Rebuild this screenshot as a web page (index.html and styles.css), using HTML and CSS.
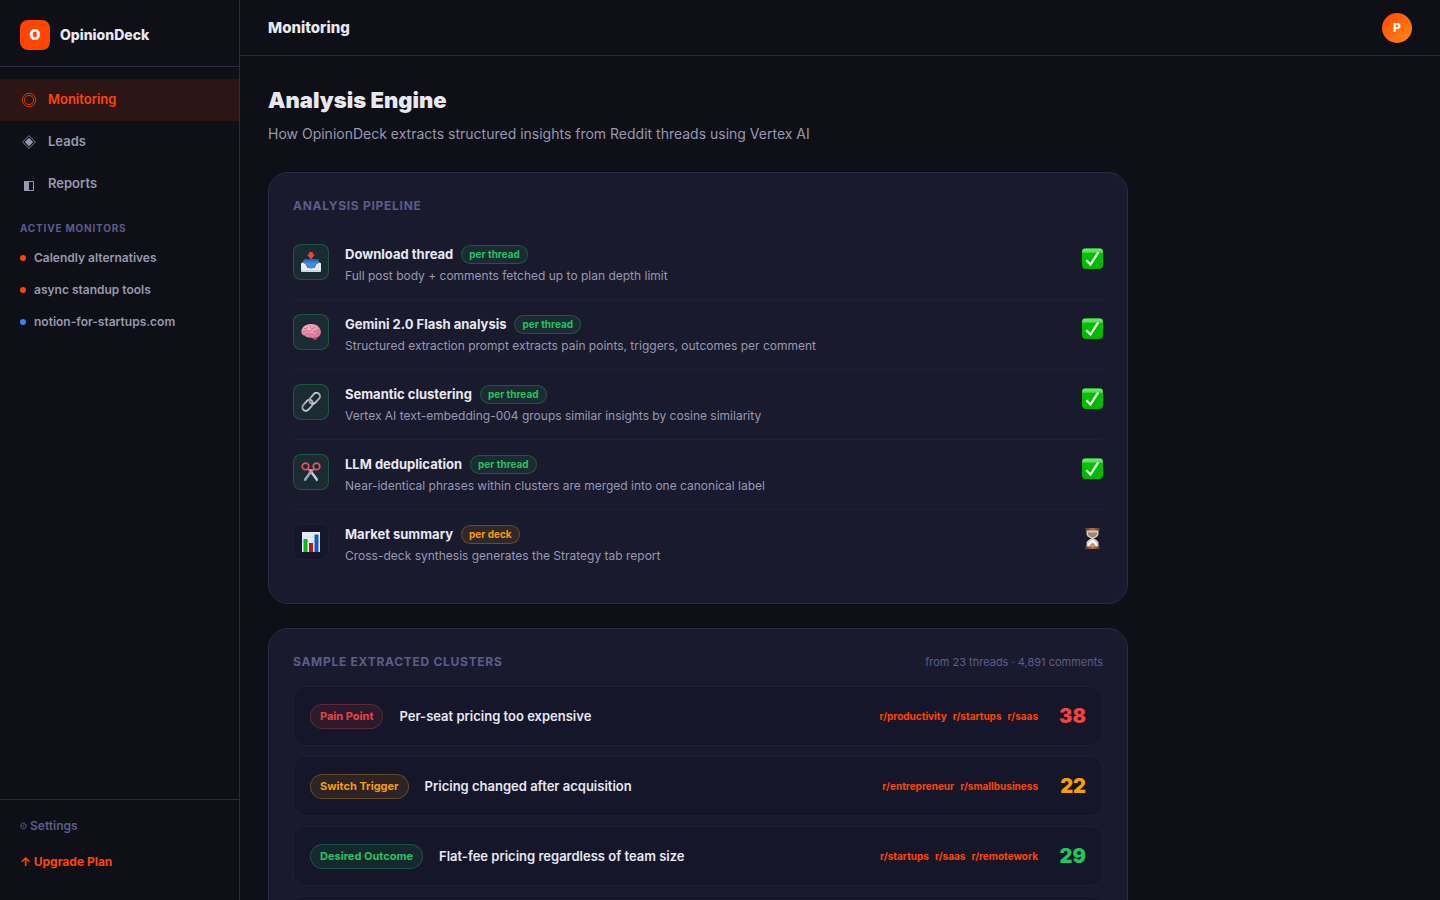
FILE: index.html
```
<!DOCTYPE html>
<html lang="en">
<head>
    <meta charset="UTF-8">
    <meta name="viewport" content="width=device-width, initial-scale=1.0">
    <title>OpinionDeck - Monitoring</title>
    <link rel="stylesheet" href="styles.css">
</head>
<body>
    <!-- Shared icon shapes -->
    <svg class="defs" width="0" height="0" aria-hidden="true">
        <defs>
            <linearGradient id="check-fill" x1="0" y1="0" x2="0" y2="1">
                <stop offset="0" stop-color="#0a9a14"/>
                <stop offset="0.08" stop-color="#7fe27f"/>
                <stop offset="0.2" stop-color="#4fd650"/>
                <stop offset="0.26" stop-color="#00c400"/>
                <stop offset="1" stop-color="#00b400"/>
            </linearGradient>
            <linearGradient id="metal" x1="0" y1="0" x2="1" y2="1">
                <stop offset="0" stop-color="#8d8d92"/>
                <stop offset="0.5" stop-color="#d4d6da"/>
                <stop offset="1" stop-color="#9a9ca2"/>
            </linearGradient>
            <linearGradient id="tray-blue" x1="0" y1="0" x2="0" y2="1">
                <stop offset="0" stop-color="#1f5fae"/>
                <stop offset="1" stop-color="#4a9df0"/>
            </linearGradient>
            <radialGradient id="brain-pink" cx="0.4" cy="0.3" r="0.8">
                <stop offset="0" stop-color="#f9b9ca"/>
                <stop offset="1" stop-color="#d9708f"/>
            </radialGradient>
            <linearGradient id="wood" x1="0" y1="0" x2="1" y2="0">
                <stop offset="0" stop-color="#5f3420"/>
                <stop offset="0.5" stop-color="#b0714b"/>
                <stop offset="1" stop-color="#5f3420"/>
            </linearGradient>
            <symbol id="check" viewBox="0 0 21 21">
                <rect width="21" height="21" rx="4" fill="url(#check-fill)"/>
                <path d="M4.3 12.2l4.2 4.3L16.2 4.4" fill="none" stroke="#fff" stroke-width="2.2"/>
            </symbol>
        </defs>
    </svg>

    <aside class="sidebar">
        <div class="logo">
            <div class="logo-mark">O</div>
            <span class="logo-name">OpinionDeck</span>
        </div>
        <nav class="nav">
            <a href="#" class="nav-item active">
                <svg class="nav-icon" viewBox="0 0 18 18" fill="none" stroke="currentColor" stroke-width="0.8">
                    <circle cx="9" cy="10" r="6.7"/>
                    <circle cx="9" cy="10" r="4.6"/>
                </svg>
                Monitoring
            </a>
            <a href="#" class="nav-item">
                <svg class="nav-icon" viewBox="0 0 18 18">
                    <path d="M9 3.6L15.4 10 9 16.4 2.6 10z" fill="none" stroke="currentColor" stroke-width="0.8"/>
                    <path d="M9 5.8l4.2 4.2L9 14.2 4.8 10z" fill="currentColor"/>
                </svg>
                Leads
            </a>
            <a href="#" class="nav-item">
                <svg class="nav-icon" viewBox="0 0 18 18">
                    <path d="M4.5 7.5h9v9h-9z" fill="none" stroke="currentColor"/>
                    <path d="M4 7h5v10H4z" fill="currentColor"/>
                </svg>
                Reports
            </a>
            <div class="nav-label">Active Monitors</div>
            <a href="#" class="monitor"><span class="dot"></span>Calendly alternatives</a>
            <a href="#" class="monitor"><span class="dot"></span>async standup tools</a>
            <a href="#" class="monitor"><span class="dot blue"></span>notion-for-startups.com</a>
        </nav>
        <div class="sidebar-footer">
            <a href="#" class="footer-link">
                <svg class="gear" viewBox="0 0 7 8" fill="none" stroke="currentColor">
                    <circle cx="3.5" cy="4" r="2.4" stroke-width="0.8"/>
                    <circle cx="3.5" cy="4" r="3.1" stroke-width="0.8" stroke-dasharray="1.2 1.2"/>
                    <circle cx="3.5" cy="4" r="0.7" stroke="none" fill="currentColor"/>
                </svg>
                Settings
            </a>
            <a href="#" class="footer-link upgrade">↑ Upgrade Plan</a>
        </div>
    </aside>

    <div class="main">
        <header class="topbar">
            <div class="topbar-title">Monitoring</div>
            <button class="avatar" type="button">P</button>
        </header>

        <main class="content">
            <h1>Analysis Engine</h1>
            <p class="subtitle">How OpinionDeck extracts structured insights from Reddit threads using Vertex AI</p>

            <section class="card">
                <div class="card-header">
                    <h2>Analysis Pipeline</h2>
                </div>
                <div class="step done">
                    <div class="step-icon">
                        <svg viewBox="0 0 20 20">
                            <path d="M3 7h14l2.4 6H.6z" fill="url(#tray-blue)"/>
                            <path d="M0 11.5l1.2-1 3.6 2 1.6 3.2h7.2l1.6-3.2 3.6-2 1.2 1V19q0 1-1 1H1q-1 0-1-1z" fill="#e9edf0"/>
                            <path d="M4.8 11.5h10.4l-2 4.2-3.2 1-3.2-1z" fill="#3d8fe6"/>
                            <path d="M0 19h20" stroke="#b4bac0" stroke-width="0.8"/>
                            <path d="M8.2 0h3.6v2.6H14L10 7.4 6 2.6h2.2z" fill="#f44336"/>
                        </svg>
                    </div>
                    <div class="step-body">
                        <div class="step-title">Download thread <span class="tag green">per thread</span></div>
                        <div class="step-desc">Full post body + comments fetched up to plan depth limit</div>
                    </div>
                    <svg class="step-status" role="img" aria-label="Done"><use href="#check"/></svg>
                </div>
                <div class="step done">
                    <div class="step-icon">
                        <svg viewBox="0 0 20 20">
                            <path d="M10.5 14.5q3.8-1.2 6 .8 0 2.4-3 2.7-1.6-.6-3-3.500z" fill="#b24a68"/>
                            <path d="M.4 10.500C0 6.500 3 3.200 7 2.500 11 1.400 16 2.200 18 5.200c1.700 2 2.600 5 1.200 7.600-.8 2-2.800 3-4.700 2.500-2.200 1-4.500.6-6 .200-2 .300-3.500-.8-4.600-1.800C1.500 13.600.6 12 .4 10.500z" fill="url(#brain-pink)"/>
                            <path d="M3 6.500q3 1 4-1.500M2 10.500q2.500-3 5-1.500t4-1.500M9 3.500q-.5 3 2 3t3-2M12 9q2 2 4 0t2.500-1M4 13q2-2.500 5-1t4 .500M15 12.500q1.500-.5 3-2.500" fill="none" stroke="#c5577a" stroke-width="0.8"/>
                        </svg>
                    </div>
                    <div class="step-body">
                        <div class="step-title">Gemini 2.0 Flash analysis <span class="tag green">per thread</span></div>
                        <div class="step-desc">Structured extraction prompt extracts pain points, triggers, outcomes per comment</div>
                    </div>
                    <svg class="step-status" role="img" aria-label="Done"><use href="#check"/></svg>
                </div>
                <div class="step done">
                    <div class="step-icon">
                        <svg viewBox="0 0 20 20" fill="none" stroke="url(#metal)" stroke-width="1.900">
                            <rect x="0.500" y="10" width="12.500" height="7" rx="3.500" transform="rotate(-48 6.500 13.500)"/>
                            <rect x="7.500" y="3" width="12.500" height="7" rx="3.500" transform="rotate(-48 13.500 6.500)"/>
                        </svg>
                    </div>
                    <div class="step-body">
                        <div class="step-title">Semantic clustering <span class="tag green">per thread</span></div>
                        <div class="step-desc">Vertex AI text-embedding-004 groups similar insights by cosine similarity</div>
                    </div>
                    <svg class="step-status" role="img" aria-label="Done"><use href="#check"/></svg>
                </div>
                <div class="step done">
                    <div class="step-icon">
                        <svg viewBox="0 0 20 20">
                            <path d="M13.400 7L4.300 19.500q-2-.8-1-3L10.500 7z" fill="#9aa7b5"/>
                            <path d="M6.600 7l9.100 12.500q2-.8 1-3L9.500 7z" fill="#c3ccd6"/>
                            <circle cx="10" cy="10" r="0.800" fill="#6d7884"/>
                            <g fill="none" stroke="#e8545a" stroke-width="1.700">
                                <ellipse cx="4.500" cy="4.400" rx="3.300" ry="3.300"/>
                                <ellipse cx="15.500" cy="4.400" rx="3.300" ry="3.300"/>
                                <path d="M6.500 6.800L9 9M13.500 6.800L11 9"/>
                            </g>
                        </svg>
                    </div>
                    <div class="step-body">
                        <div class="step-title">LLM deduplication <span class="tag green">per thread</span></div>
                        <div class="step-desc">Near-identical phrases within clusters are merged into one canonical label</div>
                    </div>
                    <svg class="step-status" role="img" aria-label="Done"><use href="#check"/></svg>
                </div>
                <div class="step">
                    <div class="step-icon">
                        <svg viewBox="0 0 20 20">
                            <path d="M1 0h18v20H1z" fill="#e4edf4"/>
                            <path d="M1 5h18M1 10h18M1 15h18" stroke="#c3d2de" stroke-width="0.500"/>
                            <path d="M2.500 7h4v13h-4z" fill="#08b81c"/>
                            <path d="M8 11h4v9H8z" fill="#c4121c"/>
                            <path d="M13.500 2.500h4V20h-4z" fill="#0b5cc8"/>
                        </svg>
                    </div>
                    <div class="step-body">
                        <div class="step-title">Market summary <span class="tag amber">per deck</span></div>
                        <div class="step-desc">Cross-deck synthesis generates the Strategy tab report</div>
                    </div>
                    <svg class="step-status" viewBox="0 0 21 21" role="img" aria-label="Pending">
                        <path d="M4.500 2h12v4q0 2.500-4.800 4.500 4.800 2 4.800 4.500v4h-12v-4q0-2.500 4.800-4.500Q4.500 8.500 4.500 6z" fill="#cfcac8"/>
                        <path d="M6 4.500h9V6q-.5 2-4.500 3.500Q6.500 8 6 6z" fill="#a58468"/>
                        <path d="M5.500 18.500q.5-5 5-7 4.500 2 5 7z" fill="#f3f6fa"/>
                        <path d="M7 18.500q1-2.500 3.500-4 2.500 1.500 3.500 4z" fill="#c69a5e"/>
                        <path d="M3.200 0h14.600v2.400H3.200zM3.200 18.500h14.600V21H3.200z" fill="url(#wood)"/>
                    </svg>
                </div>
            </section>

            <section class="card">
                <div class="card-header">
                    <h2>Sample Extracted Clusters</h2>
                    <span class="card-meta">from 23 threads · 4,891 comments</span>
                </div>
                <div class="clusters">
                    <div class="cluster">
                        <span class="badge red">Pain Point</span>
                        <span class="cluster-name">Per-seat pricing too expensive</span>
                        <div class="subs">
                            <a href="#">r/productivity</a>
                            <a href="#">r/startups</a>
                            <a href="#">r/saas</a>
                        </div>
                        <span class="count red">38</span>
                    </div>
                    <div class="cluster">
                        <span class="badge amber">Switch Trigger</span>
                        <span class="cluster-name">Pricing changed after acquisition</span>
                        <div class="subs">
                            <a href="#">r/entrepreneur</a>
                            <a href="#">r/smallbusiness</a>
                        </div>
                        <span class="count amber">22</span>
                    </div>
                    <div class="cluster">
                        <span class="badge green">Desired Outcome</span>
                        <span class="cluster-name">Flat-fee pricing regardless of team size</span>
                        <div class="subs">
                            <a href="#">r/startups</a>
                            <a href="#">r/saas</a>
                            <a href="#">r/remotework</a>
                        </div>
                        <span class="count green">29</span>
                    </div>
                    <div class="cluster"></div>
                </div>
            </section>
        </main>
    </div>
</body>
</html>
```
FILE: styles.css
```
:root {
    --bg: #0f0f17;
    --card: #1a1a2e;
    --inner: #16162a;
    --border: #2a2a45;
    --border-soft: #1e1e35;
    --text: #e8e8f0;
    --muted: #9898b0;
    --dim: #5c5c8a;
    --orange: #ff4500;
    --red: #ef4444;
    --amber: #f59e0b;
    --green: #22c55e;
}

* {
    margin: 0;
    padding: 0;
    box-sizing: border-box;
}

body {
    display: flex;
    height: 100vh;
    overflow: hidden;
    background: var(--bg);
    color: var(--text);
    font-family: Inter, sans-serif;
    font-size: 14px;
    line-height: 20px;
}

a {
    color: inherit;
    text-decoration: none;
}

.defs {
    position: absolute;
}

/* Sidebar */
.sidebar {
    display: flex;
    flex-direction: column;
    flex-shrink: 0;
    width: 240px;
    border-right: 1px solid var(--border);
}

.logo {
    display: flex;
    align-items: center;
    gap: 10px;
    padding: 20px 20px 16px;
    border-bottom: 1px solid var(--border);
}

.logo-mark {
    display: flex;
    align-items: center;
    justify-content: center;
    width: 30px;
    height: 30px;
    border-radius: 8px;
    background: var(--orange);
    color: #fff;
    font-weight: 900;
}

.logo-name {
    font-weight: 800;
    line-height: 22px;
}

.nav {
    flex: 1;
    padding: 12px 0;
}

.nav-item {
    display: flex;
    align-items: center;
    gap: 10px;
    padding: 10px 20px 12px;
    color: var(--muted);
    font-size: 13px;
    font-weight: 600;
}

.nav-item.active {
    background: rgba(255, 69, 0, 0.12);
    color: var(--orange);
}

.nav-icon {
    width: 18px;
    height: 18px;
}

.nav-label {
    padding: 15px 20px 6px;
    color: var(--dim);
    font-size: 10px;
    font-weight: 700;
    letter-spacing: 0.08em;
    line-height: 16px;
    text-transform: uppercase;
}

.monitor {
    display: flex;
    align-items: center;
    gap: 8px;
    height: 32px;
    padding: 0 20px;
    color: var(--muted);
    font-size: 12px;
    font-weight: 600;
}

.dot {
    width: 6px;
    height: 6px;
    border-radius: 50%;
    background: var(--orange);
}

.dot.blue {
    background: #3b82f6;
}

.sidebar-footer {
    padding: 16px 20px 12px;
    border-top: 1px solid var(--border);
}

.footer-link {
    display: flex;
    align-items: center;
    gap: 3px;
    margin-bottom: 16px;
    color: var(--dim);
    font-size: 12px;
    font-weight: 600;
}

.footer-link.upgrade {
    color: var(--orange);
    font-weight: 700;
}

.gear {
    width: 7px;
    height: 8px;
}

/* Main area */
.main {
    display: flex;
    flex: 1;
    flex-direction: column;
    min-width: 0;
}

.topbar {
    display: flex;
    align-items: center;
    justify-content: space-between;
    flex-shrink: 0;
    height: 56px;
    padding: 0 28px;
    border-bottom: 1px solid var(--border);
}

.topbar-title {
    font-size: 15px;
    font-weight: 800;
}

.avatar {
    width: 30px;
    height: 30px;
    border: none;
    border-radius: 50%;
    background: linear-gradient(135deg, #ff4500, #ff8c1a);
    color: #fff;
    font-family: inherit;
    font-size: 12px;
    font-weight: 800;
    cursor: pointer;
}

.content {
    flex: 1;
    max-width: 916px;
    padding: 28px;
    overflow: hidden;
}

h1 {
    margin-bottom: 6px;
    font-size: 22px;
    font-weight: 900;
    line-height: 33px;
}

.subtitle {
    margin-bottom: 28px;
    color: var(--muted);
    line-height: 21px;
}

.card {
    margin-bottom: 24px;
    padding: 24px;
    border: 1px solid var(--border);
    border-radius: 20px;
    background: var(--card);
}

.card-header {
    display: flex;
    align-items: center;
    justify-content: space-between;
    margin-bottom: 15px;
    line-height: 18px;
}

h2 {
    color: var(--dim);
    font-size: 12px;
    font-weight: 700;
    letter-spacing: 0.06em;
    text-transform: uppercase;
}

.card-meta {
    color: var(--dim);
    font-size: 11px;
}

/* Pipeline steps */
.step {
    display: flex;
    align-items: flex-start;
    gap: 16px;
    padding: 14px 0;
    border-bottom: 1px solid var(--border-soft);
}

.step:last-child {
    border-bottom: none;
}

.step-icon {
    display: flex;
    align-items: center;
    justify-content: center;
    width: 36px;
    height: 36px;
    border: 1px solid var(--border-soft);
    border-radius: 8px;
    background: var(--inner);
}

.step-icon svg {
    width: 20px;
    height: 20px;
}

.step.done .step-icon {
    border-color: rgba(34, 197, 94, 0.3);
    background: rgba(34, 197, 94, 0.1);
}

.step-body {
    flex: 1;
}

.step-title {
    display: flex;
    align-items: center;
    gap: 8px;
    margin-bottom: 3px;
    font-size: 13px;
    font-weight: 700;
}

.step-desc {
    color: var(--muted);
    font-size: 12px;
    line-height: 18px;
}

.step-status {
    width: 21px;
    height: 21px;
    margin-top: 4px;
}

.tag,
.badge {
    border: 1px solid;
    border-radius: 20px;
    font-weight: 700;
}

.tag {
    padding: 1px 7px;
    font-size: 10px;
    line-height: 15px;
}

.badge {
    padding: 3px 9px;
    font-size: 11px;
    line-height: 17px;
}

.tag.green,
.badge.green {
    border-color: rgba(34, 197, 94, 0.3);
    background: rgba(34, 197, 94, 0.1);
}

.tag.amber,
.badge.amber {
    border-color: rgba(245, 158, 11, 0.3);
    background: rgba(245, 158, 11, 0.1);
}

.badge.red {
    border-color: rgba(239, 68, 68, 0.3);
    background: rgba(239, 68, 68, 0.1);
}

.red {
    color: var(--red);
}

.amber {
    color: var(--amber);
}

.green {
    color: var(--green);
}

/* Clusters */
.clusters {
    display: flex;
    flex-direction: column;
    gap: 10px;
}

.cluster {
    display: flex;
    align-items: center;
    gap: 16px;
    min-height: 60px;
    padding: 14px 16px;
    border: 1px solid var(--border-soft);
    border-radius: 12px;
    background: var(--inner);
}

.cluster-name {
    flex: 1;
    font-size: 13px;
    font-weight: 600;
}

.subs {
    display: flex;
    gap: 6px;
    color: var(--orange);
    font-size: 10px;
    font-weight: 700;
}

.count {
    min-width: 32px;
    font-size: 20px;
    font-weight: 900;
    line-height: 30px;
    text-align: right;
}
```
